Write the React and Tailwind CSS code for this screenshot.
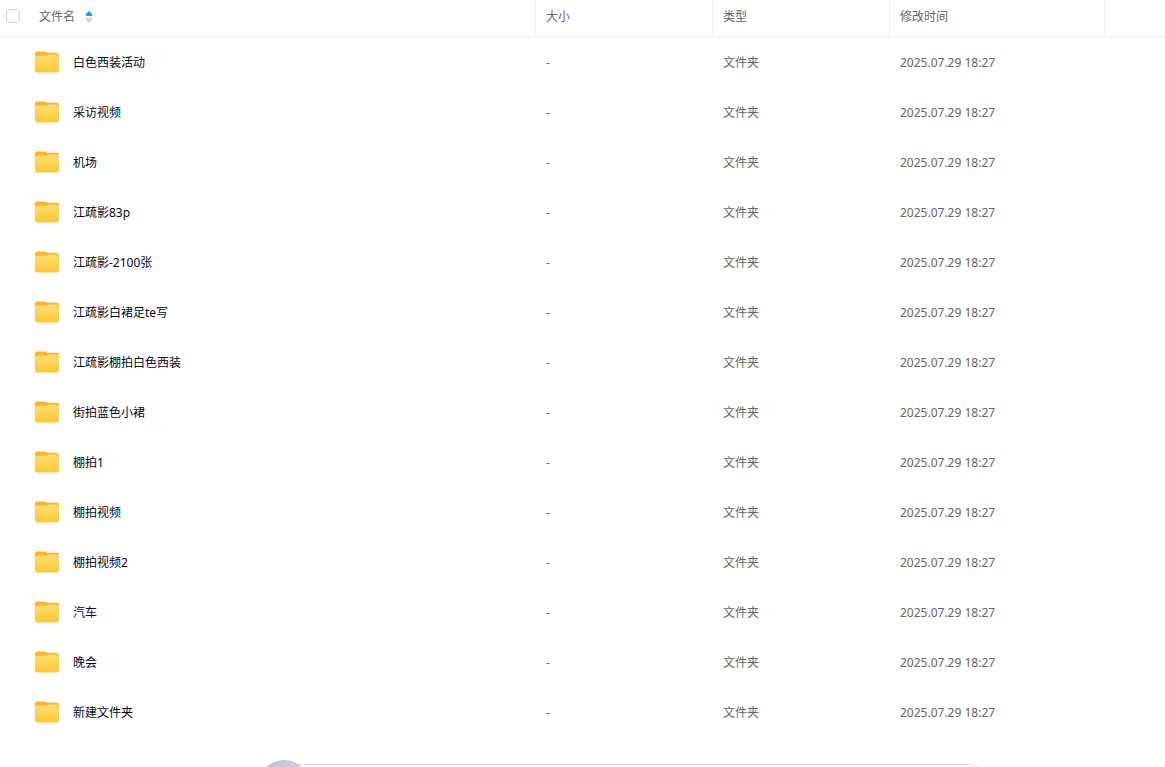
import { useState } from 'react';

const files = [
  '白色西装活动',
  '采访视频',
  '机场',
  '江疏影83p',
  '江疏影-2100张',
  '江疏影白裙足te写',
  '江疏影棚拍白色西装',
  '街拍蓝色小裙',
  '棚拍1',
  '棚拍视频',
  '棚拍视频2',
  '汽车',
  '晚会',
  '新建文件夹'
].map((name) => ({ name, size: '-', type: '文件夹', modified: '2025.07.29 18:27' }));

const FolderIcon = () => (
  <svg width="26" height="24" viewBox="0 0 26 24" className="shrink-0" aria-hidden="true">
    <defs>
      <linearGradient id="folder" x1="0" y1="0" x2="0" y2="1">
        <stop offset="0" stopColor="#ffde70" />
        <stop offset="1" stopColor="#ffc933" />
      </linearGradient>
    </defs>
    <path d="M1 3.800A2.200 2.200 0 0 1 3.200 1.600h7.300c.7 0 1.300.2 1.900.5l1.200.7H22.700A2.300 2.300 0 0 1 25 5.100V12H1z" fill="#f9b62b" />
    <path d="M1 7.500c0-1 .8-1.800 1.800-1.800h9.400c.7 0 1.200-.2 1.700-.5l.3-.2c.4-.3.900-.4 1.400-.4h6.400c1.300 0 2.200.7 2.600 1.900l.4 1.500v12.200a2.300 2.300 0 0 1-2.300 2.300H3.300A2.300 2.300 0 0 1 1 20.200z" fill="url(#folder)" />
  </svg>
);

const SortIcon = () => (
  <svg width="8" height="12" viewBox="0 0 8 12" aria-hidden="true">
    <path d="M3.300.6a1 1 0 0 1 1.400 0L7 2.900C7.600 3.800 7.200 5 6.200 5H1.800C.8 5 .4 3.800 1 2.900z" fill="#1aa0e8" />
    <path d="M3.300 11.400a1 1 0 0 0 1.400 0L7 9.100C7.600 8.200 7.200 7 6.200 7H1.800C.8 7 .4 8.200 1 9.100z" fill="#d4d4d4" />
  </svg>
);

const App = () => {
  const [allChecked, setAllChecked] = useState(false);
  const [ascending, setAscending] = useState(true);

  const rows = ascending ? files : [...files].reverse();

  return (
    <div className="min-h-screen overflow-hidden bg-white font-['Noto_Sans','Noto_Sans_CJK_SC',sans-serif] text-xs text-[#666]">
      <table className="w-full table-fixed border-collapse text-left">
        <colgroup>
          <col />
          <col className="w-[177px]" />
          <col className="w-[177px]" />
          <col className="w-[215px]" />
          <col className="w-[61px]" />
        </colgroup>
        <thead>
          <tr className="h-[37px] shadow-[inset_0_-1px_0_#eee]">
            <th className="p-0 pb-1 font-normal">
              <div className="flex items-start pl-1.5">
                <input
                  type="checkbox"
                  aria-label="全选"
                  checked={allChecked}
                  onChange={(e) => setAllChecked(e.target.checked)}
                  className="size-3.5 appearance-none rounded border border-[#d2d2d2] bg-white checked:border-[#1296db] checked:bg-[#1296db]"
                />
                <button
                  type="button"
                  onClick={() => setAscending(!ascending)}
                  className="ml-[19px] flex items-center gap-2.5"
                >
                  <span>文件名</span>
                  <SortIcon />
                </button>
              </div>
            </th>
            <th className="p-0 pb-1 pl-[11px] font-normal shadow-[inset_1px_0_0_#eee]">大小</th>
            <th className="p-0 pb-1 pl-[11px] font-normal shadow-[inset_1px_0_0_#eee]">类型</th>
            <th className="p-0 pb-1 pl-[11px] font-normal shadow-[inset_1px_0_0_#eee]">修改时间</th>
            <td className="p-0 shadow-[inset_1px_0_0_#eee]"></td>
          </tr>
        </thead>
        <tbody>
          {rows.map((file) => (
            <tr key={file.name} className="h-[50px]">
              <td className="p-0">
                <div className="flex items-center gap-[13px] pl-[34px] text-[#03081a]">
                  <FolderIcon />
                  <a href="#" className="truncate pt-0.5">{file.name}</a>
                </div>
              </td>
              <td className="p-0 pt-0.5 pl-[11px]">{file.size}</td>
              <td className="p-0 pt-0.5 pl-[11px]">{file.type}</td>
              <td className="p-0 pt-0.5 pl-[11px]">{file.modified}</td>
              <td className="p-0"></td>
            </tr>
          ))}
        </tbody>
      </table>

      {/* Floating bar, peeking in from the bottom edge */}
      <div className="pointer-events-none fixed inset-x-0 bottom-0 flex h-[7px] justify-center overflow-hidden pl-20">
        <div className="relative w-17/25">
          <div className="mt-1 h-12 rounded-full border border-[#e2e2e2] bg-white"></div>
          <div className="absolute top-0 left-1 size-13 rounded-full border-2 border-[#c9c7c9] bg-linear-to-r from-[#b4c0da] to-[#ccd6e6]"></div>
        </div>
      </div>
    </div>
  );
};

export default App;
